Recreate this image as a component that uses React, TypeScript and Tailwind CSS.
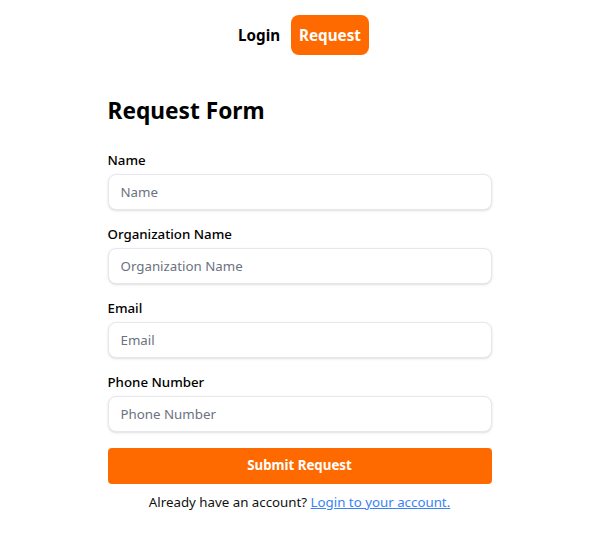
import React from "react";

const font = { fontFamily: '"Noto Sans", "Open Sans", sans-serif' };

function Field({ label }: { label: string }) {
  return (
    <div className="flex flex-col">
      <label className="text-[13.3px] leading-4 font-medium text-black mb-[6px]">{label}</label>
      <input
        placeholder={label}
        className="h-9 w-full rounded-lg border border-[#e5e7eb] bg-white px-3 text-[13.3px] text-black placeholder:text-[#6b7280] shadow-sm outline-none"
      />
    </div>
  );
}

export default function App() {
  return (
    <div className="min-h-screen bg-white text-black" style={font}>
      <nav className="flex justify-center items-center gap-[3px] pt-[15px]">
        <a className="h-10 flex items-center px-2 text-[15.2px] font-bold text-black">Login</a>
        <a className="h-10 flex items-center px-2 rounded-lg bg-[#ff6a00] text-white text-[15.2px] font-bold">Request</a>
      </nav>
      <div className="mx-auto w-[384px] mt-10">
        <h1 className="text-[22.7px] leading-8 font-bold mb-[25px]">Request Form</h1>
        <form className="flex flex-col gap-4" onSubmit={(e) => e.preventDefault()}>
          <Field label="Name" />
          <Field label="Organization Name" />
          <Field label="Email" />
          <Field label="Phone Number" />
          <button className="h-9 w-full rounded bg-[#ff6a00] text-white text-[13.3px] font-bold">Submit Request</button>
        </form>
        <p className="mt-2 text-center text-[13.3px] leading-5 text-[#111]">
          Already have an account?{" "}
          <a href="#" className="text-[#3b82f6] underline">Login to your account.</a>
        </p>
      </div>
    </div>
  );
}
